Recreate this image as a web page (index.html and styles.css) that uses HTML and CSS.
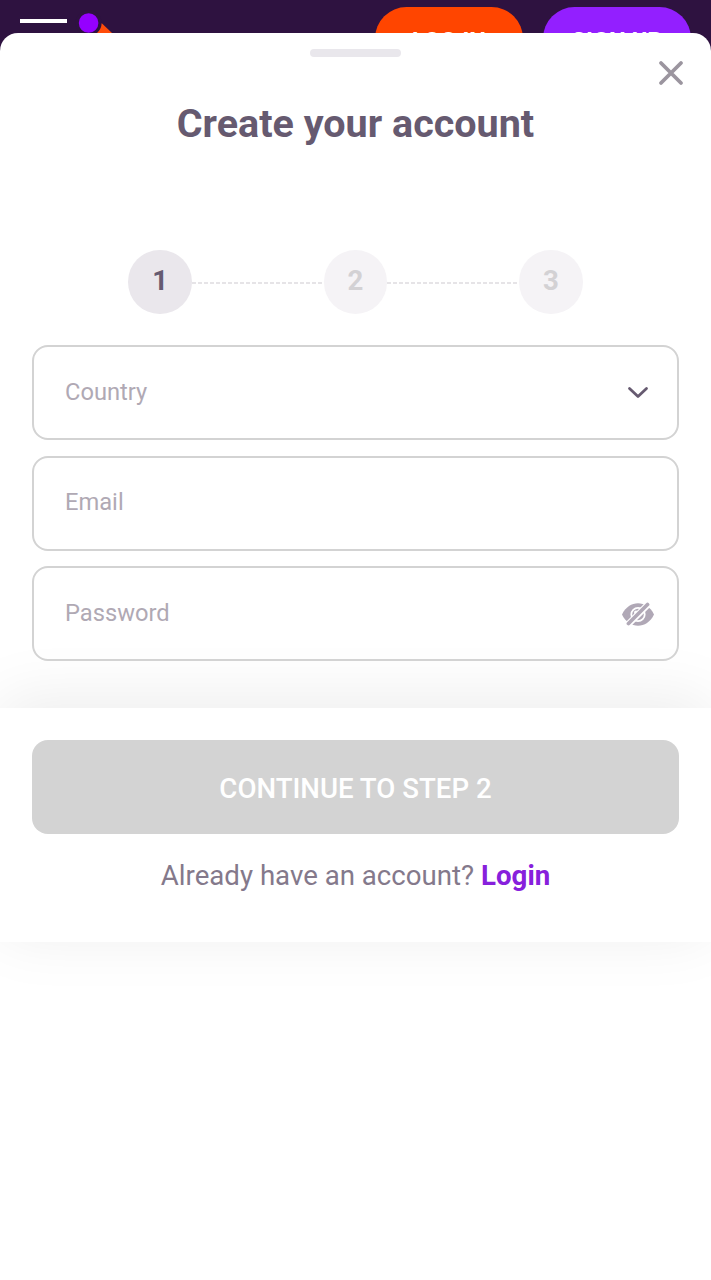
FILE: index.html
```
<!DOCTYPE html>
<html lang="en">
<head>
<meta charset="utf-8">
<title>Create your account</title>
<link rel="stylesheet" href="styles.css">
</head>
<body>
<header class="topbar">
  <div class="brand">
    <span class="menu"></span>
    <svg class="logo" width="40" height="40" viewBox="0 0 40 40"><path d="M22.500 10L54 40H8Z" fill="#ff4c0a"/><circle cx="9.600" cy="10" r="11.500" fill="none" stroke="#2e1240" stroke-width="3"/><circle cx="9.600" cy="10" r="9.800" fill="#9500ff"/></svg>
  </div>
  <div class="actions">
    <span class="pill pill-login">LOG IN</span>
    <span class="pill pill-signup">SIGN UP</span>
  </div>
</header>
<main class="sheet">
  <div class="sheet-head">
    <span class="handle"></span>
    <svg class="close" width="28" height="28" viewBox="0 0 28 28"><path d="M4 4L24 24M24 4L4 24"/></svg>
  </div>
  <h1 class="title">Create your account</h1>
  <div class="steps">
    <span class="step step-active">1</span><svg class="line" width="132" height="2"><path d="M0 1H132"/></svg><span class="step">2</span><svg class="line" width="132" height="2"><path d="M0 1H132"/></svg><span class="step">3</span>
  </div>
  <form class="fields">
    <div class="field"><span>Country</span>
      <svg class="chevron" width="24" height="16" viewBox="0 0 24 16"><path d="M3.500 3.500L12 11.500L20.500 3.500"/></svg>
    </div>
    <div class="field"><span>Email</span></div>
    <div class="field"><span>Password</span>
      <svg class="eye" width="32" height="26" viewBox="0 0 32 26"><path d="M0 12.500C7-2.500 25-2.500 32 12.500C25 27.500 7 27.500 0 12.500Z" fill="#b0a8b6"/><circle cx="16" cy="12.500" r="6.700" fill="none" stroke="#fff" stroke-width="1.800"/><circle cx="14" cy="10.500" r="2" fill="#fff"/><path d="M3.500 25L28.500 0" stroke="#fff" stroke-width="6.600"/><path d="M6.500 21.500L25.500 2.500" stroke="#b0a8b6" stroke-width="3.800" stroke-linecap="round"/></svg>
    </div>
  </form>
  <footer class="foot">
    <div class="continue">CONTINUE TO STEP 2</div>
    <p class="signin">Already have an account? <b>Login</b></p>
  </footer>
</main>
</body>
</html>
```
FILE: styles.css
```
* { box-sizing: border-box; }
body {
  margin: 0;
  height: 1280px;
  overflow: hidden;
  background: #fff;
  font-family: Roboto, "Liberation Sans", sans-serif;
}
.topbar {
  display: flex;
  justify-content: space-between;
  height: 80px;
  padding: 7px 20px 0;
  background: #2e1240;
}
.brand { display: flex; align-items: flex-start; gap: 12px; }
.menu { width: 47px; height: 4px; margin-top: 12px; background: #fff; }
.logo { margin-top: 6px; overflow: visible; }
.actions { display: flex; gap: 20px; }
.pill {
  width: 148px;
  height: 63px;
  border-radius: 32px;
  color: #fff;
  font-size: 23.700px;
  font-weight: 700;
  line-height: 69px;
  text-align: center;
}
.pill-login { background: #ff4500; }
.pill-signup { background: #931fff; }
.sheet {
  position: relative;
  height: 1247px;
  margin-top: -47px;
  border-radius: 18px 18px 0 0;
  background: #fff;
}
.sheet-head {
  display: grid;
  grid-template-columns: 1fr 91px 1fr;
  height: 60px;
  padding: 16px 26px 0;
}
.handle { grid-column: 2; height: 8px; border-radius: 4px; background: #e9e7ec; }
.close {
  justify-self: end;
  margin-top: 9.500px;
  fill: none;
  stroke: #9b959f;
  stroke-width: 3.800;
  stroke-linecap: round;
}
.title {
  margin: 7px 0 0;
  color: #665a70;
  font-size: 39.500px;
  font-weight: 700;
  line-height: 48px;
  text-align: center;
}
.steps {
  display: flex;
  align-items: center;
  justify-content: center;
  height: 64px;
  margin-top: 102px;
}
.step {
  width: 63.400px;
  height: 63.400px;
  border-radius: 50%;
  background: #f5f3f6;
  color: #d3d1d4;
  font-size: 27.600px;
  font-weight: 700;
  line-height: 62px;
  text-align: center;
}
.step-active { background: #eae7ec; color: #665a70; }
.line { margin-top: 2px; fill: none; stroke: #e6e4e7; stroke-width: 2; stroke-dasharray: 4 2; }
.fields {
  display: flex;
  flex-direction: column;
  gap: 15.500px;
  padding: 31px 32px 0;
}
.field {
  display: flex;
  align-items: center;
  justify-content: space-between;
  height: 95px;
  padding: 0 24px 2px 31px;
  border: 2px solid #d3d3d3;
  border-radius: 16px;
  color: #b0a9b4;
  font-size: 23.700px;
}
.chevron {
  margin-top: 2px;
  margin-right: 3px;
  fill: none;
  stroke: #665a70;
  stroke-width: 2.800;
  stroke-linecap: round;
  stroke-linejoin: round;
}
.eye { margin-top: 4px; margin-right: -1px; }
.foot {
  height: 234px;
  margin-top: 47px;
  padding: 32px 32px 0;
  background: #fff;
  box-shadow: 0 -8px 60px rgba(0, 0, 0, 0.08);
}
.continue {
  height: 94px;
  border-radius: 16px;
  background: #d3d3d3;
  color: #fff;
  font-size: 27.650px;
  font-weight: 500;
  line-height: 97px;
  text-align: center;
}
.signin {
  margin: 26px 0 0;
  color: #84798b;
  font-size: 27.650px;
  line-height: 32px;
  text-align: center;
}
.signin b { color: #8720dc; font-weight: 700; }
```
